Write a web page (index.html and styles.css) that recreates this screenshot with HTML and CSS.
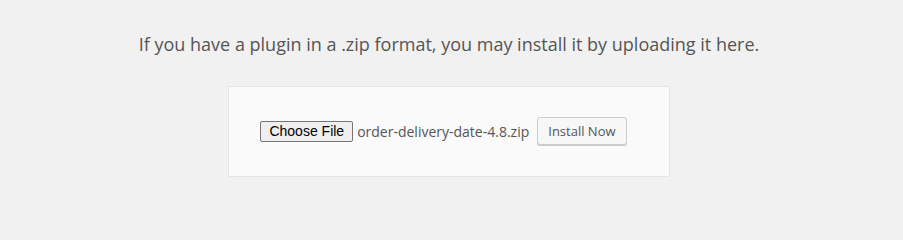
FILE: index.html
```html
<!DOCTYPE html>
<html>
<head>
<meta charset="utf-8">
<link rel="stylesheet" href="styles.css">
</head>
<body>
<div class="upload-plugin">
  <p class="install-help">If you have a plugin in a .zip format, you may install it by uploading it here.</p>
  <form class="wp-upload-form">
    <span class="file-input">
      <button type="button" class="choose-btn">Choose File</button>
      <span class="file-name">order-delivery-date-4.8.zip</span>
    </span>
    <button type="button" class="button">Install Now</button>
  </form>
</div>
</body>
</html>
```
FILE: styles.css
```css
html, body {
  margin: 0;
  padding: 0;
  background: #f1f1f1;
}
body {
  font-family: "Open Sans", sans-serif;
  color: #444;
}
.upload-plugin {
  width: 898px;
  text-align: center;
}
.install-help {
  margin: 0;
  padding: 32px 0 0;
  font-size: 18px;
  line-height: 24px;
  color: #555;
}
.wp-upload-form {
  display: inline-flex;
  align-items: center;
  margin: 30px auto 0;
  padding: 30px 42px 31px 31px;
  background: #fafafa;
  border: 1px solid #e5e5e5;
}
.file-input {
  display: inline-flex;
  align-items: center;
}
.choose-btn {
  font-family: "Liberation Sans", Arial, sans-serif;
  font-size: 14px;
  color: #000;
  height: 21px;
  padding: 0 8px;
  margin: 0 4px 0 0;
  background: #efefef;
  border: 1px solid #767676;
  border-radius: 2px;
  line-height: 17px;
}
.file-name {
  font-family: "Open Sans", sans-serif;
  font-size: 14px;
  color: #555;
}
.button {
  margin-left: 8px;
  height: 28px;
  padding: 0 10px 1px;
  font-family: "Open Sans", sans-serif;
  font-size: 13px;
  line-height: 26px;
  color: #555;
  background: #f7f7f7;
  border: 1px solid #ccc;
  border-radius: 3px;
  box-shadow: 0 1px 0 #ccc;
}
```
